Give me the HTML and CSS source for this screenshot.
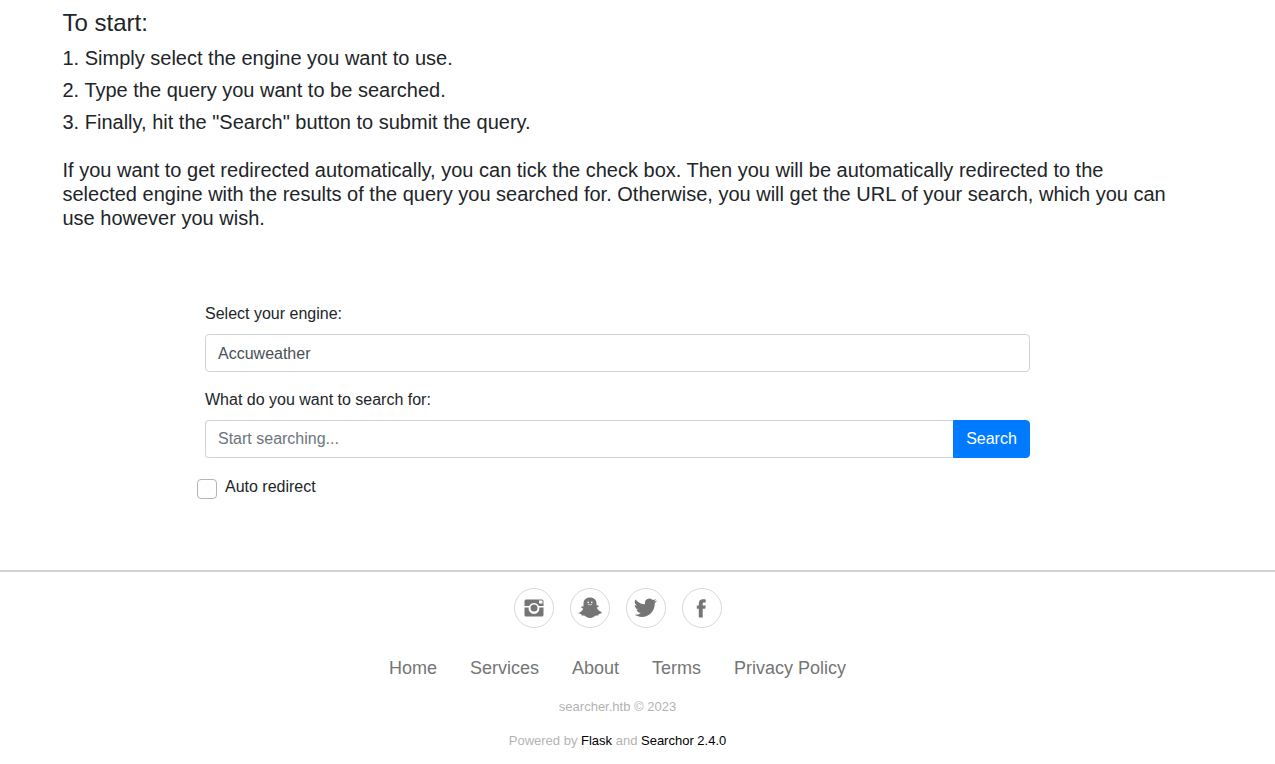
FILE: index.html
```html
<!DOCTYPE html>
<html lang="en">
<head>
    <meta charset="UTF-8">
    <meta name="viewport" content="width=device-width, initial-scale=1.0">
    <title>Searcher</title>
    <link rel="stylesheet" href="styles.css">
</head>
<body>
    <main class="page">
        <section class="intro">
            <h4>To start:</h4>
            <ol class="steps">
                <li>1. Simply select the engine you want to use.</li>
                <li>2. Type the query you want to be searched.</li>
                <li>3. Finally, hit the "Search" button to submit the query.</li>
            </ol>
            <p>If you want to get redirected automatically, you can tick the check box. Then you will be automatically redirected to the selected engine with the results of the query you searched for. Otherwise, you will get the URL of your search, which you can use however you wish.</p>
        </section>
        <form class="search-form">
            <label class="form-label">Select your engine:</label>
            <div class="form-control">Accuweather</div>
            <label class="form-label">What do you want to search for:</label>
            <div class="input-group">
                <input class="form-control query" type="text" placeholder="Start searching...">
                <button class="btn-search" type="button">Search</button>
            </div>
            <div class="check-row">
                <input class="check" type="checkbox">
                <label>Auto redirect</label>
            </div>
        </form>
    </main>
    <footer class="footer">
        <div class="page">
            <div class="social">
                <a href="#" class="social-icon">
                    <svg width="20" height="20" viewBox="0 0 20 20"><path fill-rule="evenodd" d="M2 1.500h16a1.500 1.500 0 0 1 1.500 1.500v14a1.500 1.500 0 0 1-1.500 1.500H2A1.500 1.500 0 0 1 .5 17V3A1.500 1.500 0 0 1 2 1.500zM.5 8v1.500h4.200a5.400 5.400 0 1 0 10.600 0h4.200V8h-4.700a5.400 5.400 0 0 0-9.600 0zM15 2.500v3h3.500v-3zM10 6.500a3.500 3.500 0 1 1 0 7 3.500 3.500 0 0 1 0-7z"/></svg>
                </a>
                <a href="#" class="social-icon">
                    <svg width="24" height="22" viewBox="0 0 24 22"><path fill-rule="evenodd" d="M12 .5c4 0 6.500 2.700 6.500 5.800v2.300l1.600-.4.800 1.200-2.200 1.400c.7 1.900 2.600 3.400 4.800 4.200v1.200l-2.800 1-.5 1.400-2.400-.1c-1.500.6-3 2.500-5.800 2.500s-4.300-1.900-5.800-2.500l-2.400.1-.5-1.400-2.800-1V16c2.200-.8 4.100-2.300 4.800-4.200L3.100 10.400l.8-1.200 1.600.4V6.300C5.500 3.200 8 .5 12 .5zM10.200 4.600a.8.800 0 1 0 0 1.600.8.800 0 0 0 0-1.600zM13.800 4.600a.8.800 0 1 0 0 1.600.8.800 0 0 0 0-1.600zM9.600 7.400c1.400 1.100 3.400 1.100 4.800 0l-.4-.5c-1.100.8-2.900.8-4 0z"/></svg>
                </a>
                <a href="#" class="social-icon">
                    <svg width="23" height="20" viewBox="0 0 24 20"><path d="M23.500 2.400c-.9.400-1.800.7-2.800.8 1-.6 1.800-1.500 2.100-2.700-.9.600-2 1-3.100 1.200A4.800 4.800 0 0 0 11.500 6.100 13.700 13.700 0 0 1 1.600 1.100a4.800 4.800 0 0 0 1.500 6.400c-.8 0-1.500-.2-2.200-.6v.1c0 2.300 1.700 4.300 3.900 4.700-.7.200-1.500.2-2.200.1.600 1.900 2.400 3.300 4.500 3.300A9.700 9.700 0 0 1 .5 17.100a13.700 13.700 0 0 0 7.400 2.200c8.900 0 13.800-7.400 13.800-13.800v-.6c.9-.7 1.700-1.500 2.300-2.500z"/></svg>
                </a>
                <a href="#" class="social-icon">
                    <svg width="11" height="20" viewBox="0 -1 11 20"><path d="M2.800 18.500V9.800H.8V6.500h2V4.500C2.800 1.800 4.400.3 7 .3c1 0 2 .1 2.700.2v2.900H8.200c-1.200 0-1.500.6-1.500 1.500v1.600h3l-.4 3.300H6.700v8.700z"/></svg>
                </a>
            </div>
            <ul class="footer-links">
                <li><a href="#">Home</a></li>
                <li><a href="#">Services</a></li>
                <li><a href="#">About</a></li>
                <li><a href="#">Terms</a></li>
                <li><a href="#">Privacy Policy</a></li>
            </ul>
            <p class="copyright">searcher.htb © 2023</p>
            <p class="powered">Powered by <a href="#">Flask</a> and <a href="#">Searchor 2.4.0</a></p>
        </div>
    </footer>
</body>
</html>
```

FILE: styles.css
```css
body {
    font-family: 'Liberation Sans', Arial, sans-serif;
    margin: 0;
    padding: 0;
    background: #fff;
    color: #212529;
    font-size: 16px;
    line-height: 1.5;
}
.page {
    width: 1235px;
}
.intro {
    width: 1110px;
    margin: 0 auto;
    padding-top: 9px;
}
.intro h4 {
    font-size: 24px;
    font-weight: 400;
    line-height: 1.2;
    margin: 0 0 8px;
}
.steps {
    list-style: none;
    margin: 0 0 24px;
    padding: 0;
    font-size: 20px;
}
.steps li {
    line-height: 24px;
    margin-bottom: 8px;
}
.intro p {
    font-size: 20px;
    line-height: 24px;
    margin: 0;
}
.search-form {
    width: 825px;
    margin: 0 auto;
    padding-top: 72px;
}
.form-label {
    display: block;
    line-height: 24px;
    margin-bottom: 8px;
}
.form-control {
    display: block;
    box-sizing: border-box;
    width: 100%;
    height: 38px;
    padding: 7px 12px 5px;
    font-family: inherit;
    font-size: 16px;
    line-height: 24px;
    color: #495057;
    background: #fff;
    border: 1px solid #ced4da;
    border-radius: 4px;
    margin-bottom: 16px;
}
.input-group {
    display: flex;
}
.query {
    flex: 1;
    margin-bottom: 0;
    padding: 6px 12px;
    border-radius: 4px 0 0 4px;
    border-right: 0;
    outline: none;
}
.query::placeholder {
    color: #6c757d;
}
.btn-search {
    width: 77px;
    height: 38px;
    padding: 0;
    font-family: inherit;
    font-size: 16px;
    color: #fff;
    background: #007bff;
    border: 1px solid #007bff;
    border-radius: 0 4px 4px 0;
}
.check-row {
    display: flex;
    align-items: flex-start;
    margin: 16px 0 0 -8px;
    line-height: 26px;
}
.check {
    appearance: none;
    width: 20px;
    height: 20px;
    margin: 5px 8px 0 0;
    background: #fff;
    border: 1px solid #adb5bd;
    border-radius: 4px;
}
.footer {
    margin-top: 70px;
    border-top: 2px solid #d2d2d2;
    text-align: center;
    padding-top: 16px;
}
.social {
    display: flex;
    justify-content: center;
    gap: 16px;
}
.social-icon {
    display: flex;
    align-items: center;
    justify-content: center;
    width: 40px;
    height: 40px;
    box-sizing: border-box;
    border: 1px solid #d8d8d8;
    border-radius: 50%;
}
.social-icon svg {
    fill: #757575;
}
.footer-links {
    display: flex;
    justify-content: center;
    gap: 33px;
    list-style: none;
    margin: 27px 0 0;
    padding: 0;
    font-size: 18px;
    line-height: 27px;
}
.footer-links a {
    color: #757575;
    text-decoration: none;
}
.copyright, .powered {
    font-size: 13px;
    line-height: 20px;
    color: #b3b3b3;
    margin: 0;
}
.copyright {
    margin-top: 15px;
}
.powered {
    margin-top: 14px;
}
.powered a {
    color: #000;
    text-decoration: none;
}
```
